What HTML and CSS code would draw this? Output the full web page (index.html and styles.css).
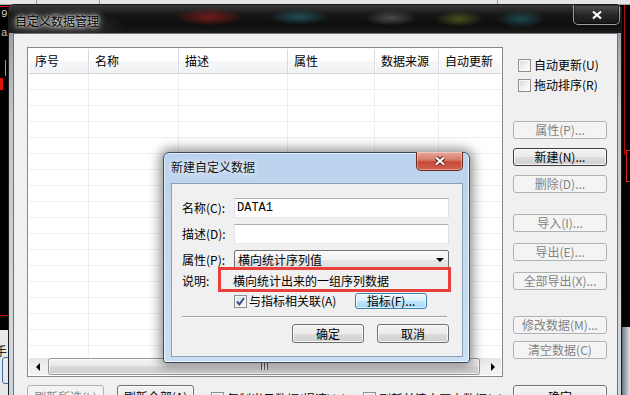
FILE: index.html
```html
<!DOCTYPE html>
<html lang="zh-CN">
<head>
<meta charset="utf-8">
<title>自定义数据管理</title>
<link rel="stylesheet" href="styles.css">
</head>
<body>
<div class="desk">
	<!-- the trading app behind the dialogs -->
	<div class="bg-top"><span class="tab t1"></span><span class="tab t2"></span><span class="tab t3"></span></div>
	<div class="bg-left">
		<span class="bl-red1"></span>
		<span class="bl-9">9</span>
		<span class="bl-a">a</span>
		<span class="bl-cyan"></span>
		<span class="bl-red2"></span>
		<span class="bl-red3"></span>
		<div class="bl-panel"><span class="bl-hand">手</span><span class="bl-box"></span></div>
	</div>
	<div class="bg-right">
		<span class="br-line"></span>
		<span class="br-rect"></span>
		<div class="br-panel"></div>
	</div>

	<!-- 自定义数据管理 -->
	<div class="win-main">
		<div class="cap-main">
			<span class="title glow-dark">自定义数据管理</span>
			<span class="close-main">
				<svg width="12" height="10" viewBox="0 0 12 10"><path d="M2 1.5L10 8.5M10 1.5L2 8.5" stroke="#2a2a2a" stroke-width="4"/><path d="M2 1.5L10 8.5M10 1.5L2 8.5" stroke="#fff" stroke-width="2.2"/></svg>
			</span>
		</div>
		<div class="client-main">
			<div class="lv">
				<div class="lv-head">
					<span class="c1">序号</span>
					<span class="c2">名称</span>
					<span class="c3">描述</span>
					<span class="c4">属性</span>
					<span class="c5">数据来源</span>
					<span class="c6">自动更新</span>
				</div>
				<div class="lv-body">
					<span class="c1"></span>
					<span class="c2"></span>
					<span class="c3"></span>
					<span class="c4"></span>
					<span class="c5"></span>
					<span class="c6"></span>
				</div>
				<div class="hscroll">
					<span class="sb-btn"><i class="arr-l"></i></span>
					<span class="sb-thumb"><i class="grip"></i></span>
					<span class="sb-fill"></span>
					<span class="sb-btn"><i class="arr-r"></i></span>
				</div>
			</div>

			<div class="side">
				<label class="chk-row"><span class="chk"></span>自动更新(U)</label>
				<label class="chk-row"><span class="chk"></span>拖动排序(R)</label>
				<div class="grp g1">
					<span class="btn off">属性(P)...</span>
					<span class="btn dflt">新建(N)...</span>
					<span class="btn off">删除(D)...</span>
				</div>
				<div class="grp g2">
					<span class="btn off">导入(I)...</span>
					<span class="btn off">导出(E)...</span>
					<span class="btn off">全部导出(X)...</span>
				</div>
				<div class="grp g3">
					<span class="btn off">修改数据(M)...</span>
					<span class="btn off">清空数据(C)</span>
				</div>
			</div>

			<div class="bar">
				<span class="btn off wide">刷新所选(L)</span>
				<span class="btn wide">刷新全部(A)</span>
				<label class="chk-row b1"><span class="chk"></span>复制当日数据(提速)(S)</label>
				<label class="chk-row b2"><span class="chk on"><svg width="9" height="9" viewBox="0 0 9 9"><path d="M1 4.5L3.4 7.3L8 1" fill="none" stroke="#3b4f8c" stroke-width="2"/></svg></span>刷新前清空历史数据(K)</label>
			</div>
			<div class="bar-side">
				<span class="btn ok">确定</span>
			</div>
		</div>
	</div>

	<!-- 新建自定义数据 -->
	<div class="dlg">
		<div class="cap-dlg">
			<span class="title glow-light">新建自定义数据</span>
			<span class="close-dlg">
				<svg width="12" height="10" viewBox="0 0 12 10"><path d="M2 1.5L10 8.5M10 1.5L2 8.5" stroke="#5b1d16" stroke-width="4"/><path d="M2 1.5L10 8.5M10 1.5L2 8.5" stroke="#fff" stroke-width="2.2"/></svg>
			</span>
		</div>
		<div class="client-dlg">
			<div class="fld"><label>名称(C):</label><input class="tb" value="DATA1" readonly></div>
			<div class="fld"><label>描述(D):</label><input class="tb" value="" readonly></div>
			<div class="fld fld-combo"><label>属性(P):</label><span class="combo">横向统计序列值<i class="arr-d"></i></span></div>
			<div class="fld fld-note"><label>说明:</label><span class="note">横向统计出来的一组序列数据</span></div>
			<div class="fld fld-chk">
				<span class="chk on"><svg width="9" height="9" viewBox="0 0 9 9"><path d="M1 4.5L3.4 7.3L8 1" fill="none" stroke="#3b4f8c" stroke-width="2"/></svg></span>
				<span class="chk-txt">与指标相关联(A)</span>
				<span class="btn hot idx">指标(F)...</span>
			</div>
			<div class="sep"></div>
			<div class="dlg-btns">
				<span class="btn">确定</span>
				<span class="btn">取消</span>
			</div>
		</div>
	</div>
</div>
</body>
</html>
```

FILE: styles.css
```css
*, *::before, *::after {
	margin: 0;
	padding: 0;
	box-sizing: border-box;
	}
body{
	width:630px;
	height:395px;
	overflow:hidden;
	background:#000;
	font-family:"Noto Sans CJK SC","Liberation Sans",sans-serif;
	font-size:12px;
	line-height:14px;
	color:#000;
	}
.desk{
	position:relative;
	width:630px;
	height:395px;
	overflow:hidden;
	background:#000;
	}

/* app behind */
.bg-top{
	position:absolute;
	left:0;top:0;
	width:630px;height:5px;
	background:#e4e4e4;
	border-bottom:1px solid #a6a6a6;
	}
.bg-top .tab{position:absolute;top:0;height:5px;border-left:1px solid #9c9c9c;}
.bg-top .t1{left:36px;}
.bg-top .t2{left:99px;}
.bg-top .t3{left:497px;}
.bg-left{
	position:absolute;
	left:0;top:5px;
	width:9px;height:390px;
	background:#000;
	color:#c8c8c8;
	font:11px/12px "Liberation Mono",monospace;
	}
.bg-left span{position:absolute;}
.bl-red1{left:0;top:1px;width:10px;height:1px;background:#e31010;}
.bl-9{left:1px;top:3px;}
.bl-a{left:1px;top:22px;}
.bl-cyan{left:5px;top:55px;width:1px;height:16px;background:#2fc8d0;}
.bl-red2{left:0;top:73px;width:3px;height:12px;background:#e31010;}
.bl-red3{left:0;top:310px;width:9px;height:1px;background:#d01010;}
.bl-panel{
	position:absolute;
	left:0;top:325px;
	width:9px;height:65px;
	background:#e9e9e9;
	}
.bl-hand{left:-5px;top:14px;color:#222;font:12px/14px "Noto Sans CJK SC",sans-serif;}
.bl-box{left:2px;top:27px;width:9px;height:27px;border:1px solid #3a6fb0;border-radius:3px;}
.bg-right{
	position:absolute;
	left:621px;top:5px;
	width:9px;height:390px;
	background:#000;
	}
.bg-right span{position:absolute;}
.br-line{left:3px;top:0;width:1px;height:150px;background:#b01010;}
.br-rect{left:5px;top:145px;width:6px;height:32px;border:1px solid #e02020;}
.br-panel{position:absolute;left:0;top:322px;width:9px;height:68px;background:linear-gradient(90deg,#5c6570,#e2e4e6);}

/* main window */
.win-main{
	position:absolute;
	left:8px;top:4px;
	width:614px;height:420px;
	border:1px solid #1c1c1c;
	border-radius:6px 6px 0 0;
	background:linear-gradient(#8f949a,#c1c5ca 25%,#d3d7db 80%,#c6d3e2);
	display:flex;
	flex-direction:column;
	overflow:hidden;
	}
.cap-main{
	height:28px;
	flex:none;
	display:flex;
	justify-content:space-between;
	align-items:flex-start;
	background:
		radial-gradient(34px 9px at 200px 12px,rgba(150,28,28,.75),transparent),
		radial-gradient(30px 8px at 290px 12px,rgba(40,110,120,.65),transparent),
		radial-gradient(26px 8px at 382px 13px,rgba(120,120,120,.55),transparent),
		radial-gradient(24px 8px at 450px 14px,rgba(110,120,40,.6),transparent),
		radial-gradient(24px 9px at 512px 14px,rgba(40,110,120,.6),transparent),
		radial-gradient(70px 12px at 50px 20px,rgba(95,95,95,.6),transparent),
		linear-gradient(#3a3a3a,#161616 35%,#0d0d0d 70%,#1b1b1b);
	}
.title{
	margin:9px 0 0 6px;
	font-size:12px;
	line-height:14px;
	}
.glow-dark{
	color:#000;
	text-shadow:0 0 3px #fff,0 0 6px rgba(255,255,255,.85),0 0 10px rgba(255,255,255,.6);
	}
.glow-light{
	color:#111;
	text-shadow:0 0 4px rgba(255,255,255,.9),0 0 8px rgba(255,255,255,.7);
	}
.close-main{
	width:47px;height:20px;
	margin-right:1px;
	display:flex;
	align-items:center;
	justify-content:center;
	border:1px solid rgba(200,200,200,.75);
	border-top:none;
	border-radius:0 0 5px 5px;
	background:linear-gradient(rgba(255,255,255,.12),rgba(255,255,255,.04));
	box-shadow:inset 0 0 0 1px rgba(0,0,0,.5);
	}
.client-main{
	flex:1;
	margin:0 3px 0 4px;
	border:1px solid #6d747c;
	background:#f0f0f0;
	padding:13px 0 0 13px;
	display:grid;
	grid-template-columns:476px 94px;
	grid-template-rows:330px 30px;
	column-gap:10px;
	row-gap:8px;
	}

/* list view */
.lv{
	border:1px solid #828790;
	background:#fff;
	padding:1px;
	display:flex;
	flex-direction:column;
	overflow:hidden;
	}
.lv-head,.lv-body{display:flex;}
.lv-head{
	height:25px;
	flex:none;
	background:linear-gradient(#fff,#fff 45%,#f6f7f9 55%,#eff1f3);
	border-bottom:1px solid #d5d5d5;
	}
.lv-head span{
	display:flex;
	align-items:center;
	padding-left:6px;
	border-right:1px solid #d8dadd;
	box-shadow:1px 0 0 #fff;
	}
.lv-body{
	flex:1;
	background:repeating-linear-gradient(#fff 0,#fff 15px,#efefef 15px,#efefef 16px);
	}
.lv-body span{border-right:1px solid #efefef;}
.c1{width:60px;}
.c2{width:90px;}
.c3{width:109px;}
.c4{width:87px;}
.c5{width:64px;}
.c6{width:62px;}
.lv-head .c6,.lv-body .c6{border-right:none;}

.hscroll{
	height:17px;
	flex:none;
	display:flex;
	background:linear-gradient(#e3e3e3,#eeeeee 40%,#f2f2f2);
	}
.sb-btn{
	width:17px;
	display:flex;
	align-items:center;
	justify-content:center;
	}
.arr-l{width:0;height:0;border:4px solid transparent;border-right:4px solid #000;border-left:none;}
.arr-r{width:0;height:0;border:4px solid transparent;border-left:4px solid #000;border-right:none;}
.sb-thumb{
	width:432px;
	margin:0 0 0 2px;
	border:1px solid #979797;
	border-radius:3px;
	background:linear-gradient(#f4f4f4,#e8e8e8 45%,#d6d6d6 55%,#cfcfcf);
	box-shadow:inset 0 0 0 1px rgba(255,255,255,.7);
	display:flex;
	align-items:center;
	justify-content:center;
	}
.grip{
	width:7px;height:7px;
	background:repeating-linear-gradient(90deg,#5a5a5a 0,#5a5a5a 1px,#eee 1px,#eee 3px);
	}
.sb-fill{flex:1;}

/* right column */
.side{
	display:flex;
	flex-direction:column;
	padding-top:8px;
	}
.chk-row{
	display:flex;
	align-items:center;
	gap:3px;
	height:20px;
	padding-left:5px;
	white-space:nowrap;
	}
.chk{
	width:13px;height:13px;
	flex:none;
	border:1px solid #8e8f8f;
	background:linear-gradient(135deg,#d6d8dc,#f4f4f5 60%,#fcfcfc);
	box-shadow:inset 0 0 0 1px #f6f6f6;
	display:flex;
	align-items:center;
	justify-content:center;
	}
.chk.on{background:linear-gradient(135deg,#dfe3ea,#f8f9fb);}
.grp{display:flex;flex-direction:column;}
.g1{margin-top:26px;gap:9px;}
.g2{margin-top:21px;gap:11px;}
.g3{margin-top:26px;gap:7px;}

.btn{
	display:flex;
	align-items:center;
	justify-content:center;
	height:18px;
	border:1px solid #707070;
	border-radius:3px;
	background:linear-gradient(#f2f2f2,#ebebeb 50%,#dddddd 50%,#cfcfcf);
	box-shadow:inset 0 0 0 1px rgba(255,255,255,.75);
	white-space:nowrap;
	}
.btn.off{
	border-color:#adb2b5;
	background:#f4f4f4;
	color:#838383;
	box-shadow:none;
	}
.btn.dflt{border-color:#3d3d3d;}
.btn.hot{
	border-color:#3c7fb1;
	background:linear-gradient(#eaf6fd,#d9f0fc 50%,#bee6fd 50%,#a7d9f5);
	box-shadow:inset 0 0 0 1px rgba(255,255,255,.6);
	}

/* bottom bar */
.bar{
	display:flex;
	align-items:flex-start;
	}
.btn.wide{width:78px;height:23px;margin-right:13px;}
.bar .chk-row{height:23px;margin-top:2px;}
.bar .b1{margin-left:-1px;width:154px;}
.btn.ok{height:23px;}

/* new data dialog */
.dlg{
	position:absolute;
	left:163px;top:152px;
	width:307px;height:211px;
	border:1px solid #3b4a5c;
	border-radius:6px 6px 3px 3px;
	background:linear-gradient(#bad2ed,#c3d8ef 35%,#cbdff4);
	box-shadow:0 0 12px 3px rgba(0,0,0,.45),inset 0 0 0 1px rgba(255,255,255,.6);
	display:flex;
	flex-direction:column;
	}
.cap-dlg{
	height:30px;
	flex:none;
	display:flex;
	justify-content:space-between;
	align-items:flex-start;
	}
.cap-dlg .title{margin:7px 0 0 7px;}
.close-dlg{
	width:47px;height:19px;
	margin:-1px 6px 0 0;
	display:flex;
	align-items:center;
	justify-content:center;
	border:1px solid #6b2a20;
	border-top:none;
	border-radius:0 0 5px 5px;
	background:linear-gradient(#e9a99c,#d77a69 45%,#c7493a 55%,#d4604d);
	box-shadow:inset 0 0 0 1px rgba(255,255,255,.35);
	}
.client-dlg{
	flex:1;
	margin:0 6px 5px 7px;
	border:1px solid #8c9fb7;
	background:#f0f0f0;
	padding:14px 13px 0 10px;
	}
.fld{
	display:flex;
	align-items:center;
	height:20px;
	margin-bottom:6px;
	}
.fld label{width:52px;flex:none;white-space:nowrap;}
.tb{
	width:215px;height:20px;
	border:1px solid;
	border-color:#abadb3 #dbdfe6 #e3e9ef #e2e3ea;
	background:#fff;
	padding:0 2px;
	font:12px "Liberation Mono",monospace;
	color:#000;
	outline:none;
	}
.combo{
	width:215px;height:20px;
	display:flex;
	align-items:center;
	padding-left:3px;
	border:1px solid #707070;
	border-radius:2px;
	background:linear-gradient(#fbfbfb,#f0f0f0 50%,#e6e6e6 50%,#dedede);
	position:relative;
	}
.arr-d{
	margin-left:auto;
	margin-right:4px;
	width:0;height:0;
	border-left:4px solid transparent;
	border-right:4px solid transparent;
	border-top:4px solid #000;
	}
.fld-combo{margin-bottom:3px;}
.fld-note{height:16px;margin-bottom:4px;position:relative;}
.note{margin-left:-1px;}
.fld-note::after{
	content:"";
	position:absolute;
	left:36px;top:-6px;
	width:233px;height:25px;
	border:3px solid #e9403e;
	}
.fld-chk{height:16px;margin-bottom:0;padding-left:52px;}
.chk-txt{margin-left:2px;}
.btn.idx{width:72px;height:16px;margin-left:auto;margin-right:22px;}
.sep{
	width:265px;
	margin-top:7px;
	border-top:1px solid #a0a0a0;
	border-bottom:1px solid #fff;
	}
.dlg-btns{
	display:flex;
	justify-content:flex-end;
	gap:13px;
	margin-top:6px;
	}
.dlg-btns .btn{width:72px;height:19px;}
```
